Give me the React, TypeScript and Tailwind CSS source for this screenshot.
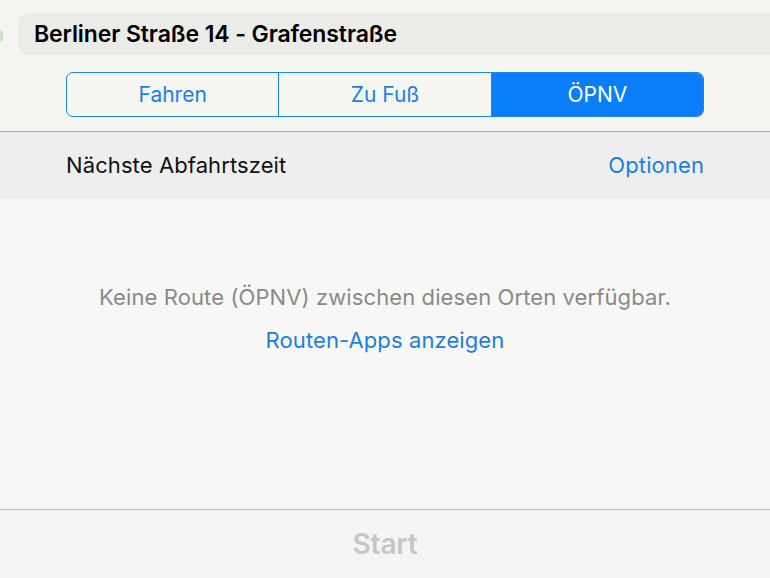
export default function App() {
  const segs = ['Fahren', 'Zu Fuß', 'ÖPNV'];
  const active = 2;

  return (
    <div className="flex h-[578px] w-[770px] flex-col overflow-hidden bg-[#f7f7f6] font-['Inter',sans-serif]">
      {/* Kopf */}
      <div className="relative h-[131px] shrink-0 bg-[#f5f6f2] pt-[13px]">
        <div className="absolute left-0 top-[30px] h-[12px] w-[3px] rounded-r bg-[#cfe3c9]" />
        <div className="ml-[18px] flex h-[42px] items-center rounded-l-[10px] bg-[#ebebe8] pl-[16px]">
          <span className="text-[23px] font-semibold tracking-[-0.1px] text-black">
            Berliner Straße 14 - Grafenstraße
          </span>
        </div>

        <div className="mx-[66px] mt-[17px] flex h-[45px] overflow-hidden rounded-[7px] border-[1.5px] border-[#1a84f2]">
          {segs.map((s, i) => (
            <div key={s}
                 className={`flex flex-1 items-center justify-center text-[21px] ${
                   i === active ? 'bg-[#0a7ef9] text-white'
                                : 'text-[#1a7fe6]'} ${
                   i > 0 ? 'border-l-[1.5px] border-[#1a84f2]' : ''}`}>
              {s}
            </div>
          ))}
        </div>
      </div>

      {/* Abfahrt */}
      <div className="flex h-[68px] shrink-0 items-center justify-between border-t border-[#adadad] bg-[#eeeeee] px-[66px]">
        <span className="text-[22px] tracking-[0.1px] text-[#111]">Nächste Abfahrtszeit</span>
        <span className="text-[22px] tracking-[0.1px] text-[#1b7ee0]">Optionen</span>
      </div>

      {/* Inhalt */}
      <div className="flex flex-1 flex-col items-center pt-[82px]">
        <p className="text-[22px] tracking-[0.1px] text-[#8a8a8a]">
          Keine Route (ÖPNV) zwischen diesen Orten verfügbar.
        </p>
        <p className="mt-[10px] text-[22px] tracking-[0.1px] text-[#1b7ee0]">
          Routen-Apps anzeigen
        </p>
      </div>

      {/* Start */}
      <div className="flex h-[69px] shrink-0 items-center justify-center border-t-[1.5px] border-[#bdbdbd] bg-[#f5f5f3]">
        <span className="text-[28px] font-semibold tracking-[-0.2px] text-[#c6c6c6]">Start</span>
      </div>
    </div>
  );
}
